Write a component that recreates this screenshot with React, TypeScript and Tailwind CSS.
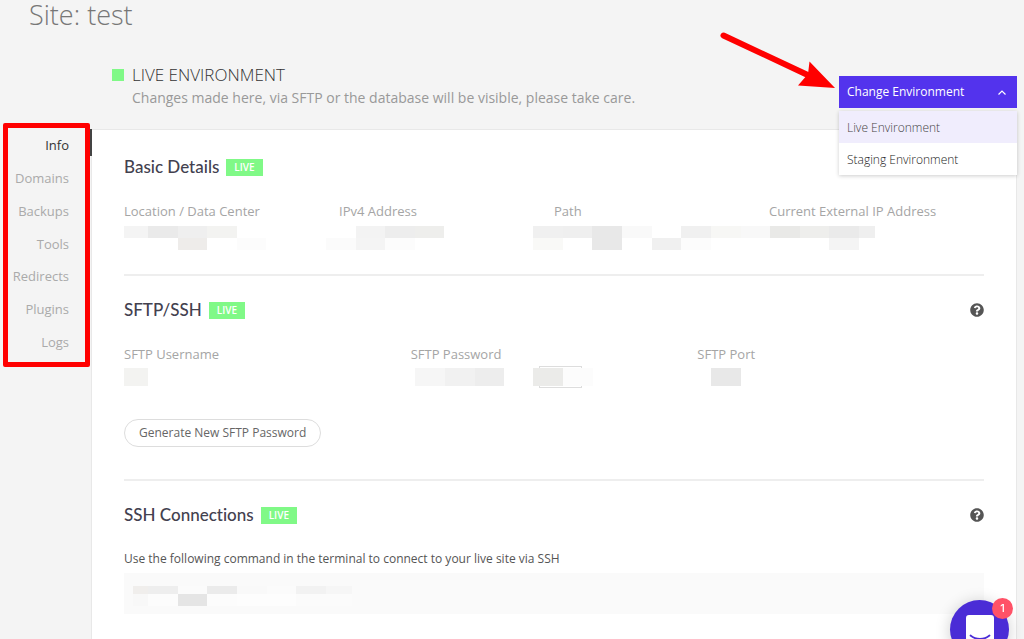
import { useState } from "react";
import { FaQuestionCircle } from "react-icons/fa";

// [width, colour], an empty colour leaves a gap
type Cell = [number, string];

const navItems = ["Info", "Domains", "Backups", "Tools", "Redirects", "Plugins", "Logs"];
const environments = ["Live Environment", "Staging Environment"];

const detailsTop: Cell[] = [
  [24, "#f4f4f4"], [30, "#eaeaea"], [29, "#efefef"], [30, "#f3f3f1"], [119, ""],
  [29, "#f3f3f3"], [30, "#ededed"], [29, "#eeeeec"], [89, ""],
  [30, "#f0f0f0"], [29, "#efefef"], [30, "#e8e8e8"], [30, "#f9f9f9"], [29, ""],
  [30, "#f0f0f0"], [30, "#f7f7f5"], [29, "#f8f8f8"], [30, "#e9e9e7"], [29, "#eeeeec"],
  [30, "#eaeaea"], [16, "#efefef"],
];
const detailsBottom: Cell[] = [
  [54, ""], [29, "#eeecea"], [30, ""], [29, "#fcfcfc"], [60, ""],
  [30, "#fbfbfb"], [29, "#f4f4f4"], [30, "#fcfcfc"], [118, ""],
  [30, "#f9f9f7"], [29, ""], [30, "#e8e8e8"], [30, ""], [29, "#f0f0f0"], [30, "#fcfcfc"],
  [118, ""], [30, "#f4f4f4"],
];
const commandTop: Cell[] = [
  [15, "#f0eeec"], [30, "#eeeeee"], [29, "#fbfbfb"], [30, "#ebebeb"], [30, "#f9f9f9"],
  [29, "#fbfbfb"], [30, "#f2f2f2"], [26, "#f6f6f6"],
];
const commandBottom: Cell[] = [
  [15, "#f8f8f8"], [30, "#fcfcfc"], [29, "#e5e5e5"], [30, "#fcfcfc"], [59, "#fdfdfd"], [56, "#fbfbfb"],
];

function Mosaic({ cells, className }: { cells: Cell[]; className: string }) {
  return (
    <div className={`flex ${className}`} aria-hidden="true">
      {cells.map(([width, color], i) => (
        <span key={i} className="shrink-0" style={{ width, backgroundColor: color || undefined }} />
      ))}
    </div>
  );
}

function SectionTitle({ title, help }: { title: string; help?: boolean }) {
  return (
    <div className="flex items-center">
      <h2 className="font-['Lato',sans-serif] text-[17px] leading-6 font-medium text-[#43414f] [font-variant-ligatures:none]">
        {title}
      </h2>
      <span className="ml-[7px] bg-[#80f987] px-2 text-[10px] leading-[17px] font-semibold text-white">LIVE</span>
      {help && (
        <button type="button" aria-label={`Help with ${title}`} className="ml-auto text-[#555]">
          <FaQuestionCircle size={14} />
        </button>
      )}
    </div>
  );
}

function EnvironmentMenu() {
  const [open, setOpen] = useState(true);
  const [selected, setSelected] = useState(environments[0]);

  return (
    <div className="relative w-[178px]">
      <button
        type="button"
        aria-expanded={open}
        onClick={() => setOpen(!open)}
        className="flex h-8 w-full items-center justify-between bg-[#5333ed] px-2 text-[12px] font-medium text-white"
      >
        Change Environment
        <svg width="14" height="14" viewBox="0 0 14 14" fill="none" stroke="currentColor" strokeWidth="1.2">
          <path d="M3.5 9.500 7 6 10.500 9.500" />
        </svg>
      </button>
      {open && (
        <ul className="absolute top-full left-0 z-10 mt-[3px] w-full bg-white shadow-[0_1px_4px_rgba(0,0,0,0.2)]">
          {environments.map((env) => (
            <li key={env}>
              <button
                type="button"
                onClick={() => setSelected(env)}
                className={`h-8 w-full px-2 pt-0.5 text-left text-[12px] font-light ${
                  env === selected ? "bg-[#f0edfd] text-[#444]" : "text-[#222]"
                }`}
              >
                {env}
              </button>
            </li>
          ))}
        </ul>
      )}
      {/* Pointer to the menu */}
      <svg className="absolute right-full bottom-0 mb-3 h-[70px] w-[124px]" viewBox="715 25 124 70" aria-hidden="true">
        <path d="M723.500 34.500 812 76" stroke="#f00" strokeWidth="6" strokeLinecap="round" />
        <path d="M835 87 809.500 60.500 808 73 798 84.500Z" fill="#f00" />
      </svg>
    </div>
  );
}

function ChatLauncher() {
  return (
    <button
      type="button"
      aria-label="Open chat, 1 unread"
      className="fixed right-[15px] -bottom-5 z-20 flex size-[59px] justify-center rounded-full bg-[#4a2cd6] shadow-[0_2px_16px_rgba(0,0,0,0.2)]"
    >
      <svg className="mt-[15px]" width="28" height="32" viewBox="0 0 28 32" fill="none">
        <path d="M3 0h22a3 3 0 0 1 3 3v29l-8-3H3a3 3 0 0 1-3-3V3a3 3 0 0 1 3-3Z" fill="#fff" />
        <path d="M4.500 20.500c5.500 4.500 13.500 4.500 19 0" stroke="#4a2cd6" strokeWidth="1.800" strokeLinecap="round" />
      </svg>
      <span className="absolute -top-0.5 -right-1 size-[21px] rounded-full bg-[#ff5267] font-['Inter',sans-serif] text-[11px] leading-[21px] font-medium text-white">
        1
      </span>
    </button>
  );
}

export default function App() {
  const [active, setActive] = useState("Info");

  return (
    <div className="flex min-h-screen flex-col bg-[#f4f4f4] font-['Open_Sans',sans-serif] text-[13px] leading-5 text-[#555]">
      <header>
        <h1 className="pl-[29px] text-[27px] leading-[30px] font-light text-[#777]">Site: test</h1>
        <div className="mt-[34px] mr-[7px] ml-28 flex items-start justify-between pb-[19px]">
          <div className="flex gap-2">
            <span className="mt-[5px] size-3 bg-[#80f987]" />
            <div>
              <p className="text-[17px] leading-[22px] font-light text-[#333]">LIVE ENVIRONMENT</p>
              <p className="text-[14px] leading-6 text-[#999]">
                Changes made here, via SFTP or the database will be visible, please take care.
              </p>
            </div>
          </div>
          <div className="mt-3">
            <EnvironmentMenu />
          </div>
        </div>
      </header>

      <div className="flex flex-1">
        <aside className="w-[91px] shrink-0">
          <div className="relative">
            <nav className="flex h-[229px] flex-col">
              {navItems.map((item) => (
                <a
                  key={item}
                  href={`#${item.toLowerCase()}`}
                  onClick={() => setActive(item)}
                  className={`relative flex flex-1 items-center justify-end pr-[22px] ${
                    item === active ? "text-[#333]" : "text-[#aaa]"
                  }`}
                >
                  {item}
                  {item === active && <span className="absolute top-0 -right-px h-[27px] w-[3px] bg-[#444]" />}
                </a>
              ))}
            </nav>
            {/* Highlight around the menu */}
            <div className="pointer-events-none absolute -top-1.5 right-px left-[3px] h-[244px] rounded-xs border-5 border-[#f00]" />
          </div>
        </aside>

        <main className="mr-[7px] min-w-0 flex-1 border border-b-0 border-[#e8e8e8] bg-white px-8">
          <section className="border-b-2 border-[#eee] pt-[25px] pb-6">
            <SectionTitle title="Basic Details" />
            <div className="mt-[22px] grid grid-cols-4 text-[#a5a5a5]">
              <span>Location / Data Center</span>
              <span>IPv4 Address</span>
              <span>Path</span>
              <span>Current External IP Address</span>
            </div>
            <Mosaic cells={detailsTop} className="mt-[5px] h-3" />
            <Mosaic cells={detailsBottom} className="h-3" />
          </section>

          <section className="border-b-2 border-[#eee] pt-[22px] pb-8">
            <SectionTitle title="SFTP/SSH" help />
            <div className="mt-[22px] grid grid-cols-3 text-[#a5a5a5]">
              <div>
                <span>SFTP Username</span>
                <Mosaic cells={[[24, "#f3f3f1"]]} className="mt-1 h-[18px]" />
              </div>
              <div>
                <span>SFTP Password</span>
                <div className="mt-0.5 flex items-center pl-1">
                  <Mosaic cells={[[30, "#f6f6f6"], [30, "#f1f1f1"], [29, "#ededed"], [29, ""]]} className="h-[18px]" />
                  <div className="relative h-[22px] w-[60px]">
                    <span className="absolute inset-y-0 left-1.5 w-[43px] border border-[#ddd]" />
                    <Mosaic cells={[[30, "#ebebe9"], [30, "#fcfcfc"]]} className="relative top-0.5 h-[18px]" />
                  </div>
                </div>
              </div>
              <div>
                <span>SFTP Port</span>
                <Mosaic cells={[[14, ""], [30, "#e8e8e8"]]} className="mt-1 h-[18px]" />
              </div>
            </div>
            <button
              type="button"
              className="mt-[31px] block h-7 rounded-full border border-[#ddd] px-3.5 text-[12px] leading-[26px] text-[#666]"
            >
              Generate New SFTP Password
            </button>
          </section>

          <section className="pt-[22px]">
            <SectionTitle title="SSH Connections" help />
            <p className="mt-[22px] text-[12px]">Use the following command in the terminal to connect to your live site via SSH</p>
            <div className="mt-1 h-[41px] bg-[#fafafa] px-[9px] pt-[13px]">
              <Mosaic cells={commandTop} className="h-2" />
              <Mosaic cells={commandBottom} className="h-3" />
            </div>
          </section>
        </main>
      </div>
      <ChatLauncher />
    </div>
  );
}
